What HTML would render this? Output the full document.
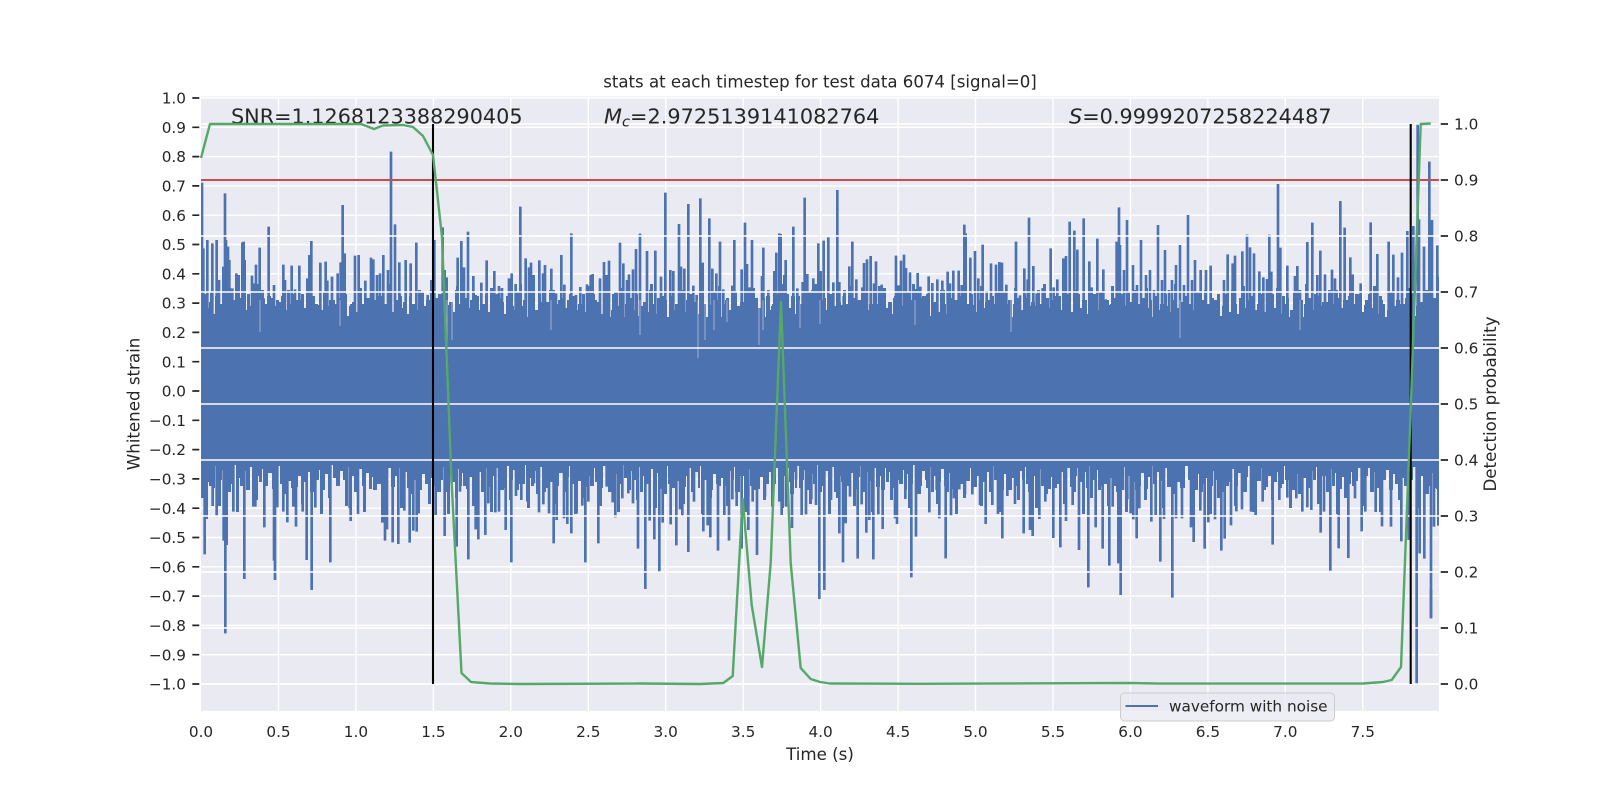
<!DOCTYPE html>
<html><head><meta charset="utf-8"><title>stats at each timestep</title>
<style>html,body{margin:0;padding:0;background:#fff}svg{display:block}text{font-family:"DejaVu Sans","Liberation Sans",sans-serif;fill:#262626}</style></head>
<body>
<svg xmlns="http://www.w3.org/2000/svg" width="1600" height="800" viewBox="0 0 1600 800">
<defs>
<clipPath id="ax"><rect x="201" y="96.5" width="1238" height="614.5"/></clipPath>
<pattern id="pt" patternUnits="userSpaceOnUse" x="201" y="284" width="97" height="34"><path fill="#4c72b0" d="M0 34V16H3V10H6V24H8V18H12V30H14V12H17V20H20V34H22V26H25V8H29V22H31V16H35V34H36V20H40V14H43V26H46V10H49V32H51V22H54V18H58V28H60V6H63V20H66V30H68V14H72V24H75V16H78V34H80V12H84V26H86V20H90V10H93V28H97V34Z"/></pattern>
<pattern id="pt2" patternUnits="userSpaceOnUse" x="201" y="270" width="131" height="48"><path fill="#4c72b0" d="M0 48V30H3V48H9V22H12V48H18V34H22V48H27V18H30V48H37V28H40V48H46V36H51V48H56V14H59V48H66V26H70V48H77V32H80V48H86V20H89V48H95V30H100V48H106V24H109V48H115V35H119V48H124V16H127V48H131Z"/></pattern>
<pattern id="pb" patternUnits="userSpaceOnUse" x="201" y="462" width="97" height="38"><path fill="#4c72b0" d="M0 0V14H3V6H6V20H9V10H12V26H14V4H17V18H21V8H24V28H27V12H30V22H33V3H35V16H39V24H42V9H45V18H48V5H51V30H54V14H58V20H61V7H64V24H67V11H71V27H74V15H77V4H79V22H83V10H86V19H90V6H93V25H97V0Z"/></pattern>
<pattern id="pb2" patternUnits="userSpaceOnUse" x="201" y="462" width="127" height="58"><path fill="#4c72b0" d="M0 0V36H3V0H8V24H12V0H17V44H20V0H26V30H30V0H35V50H38V0H45V28H49V0H54V38H57V0H63V22H67V0H72V46H75V0H81V32H85V0H90V26H94V0H100V42H103V0H109V30H113V0H119V52H122V0H127Z"/></pattern>
</defs>
<rect width="1600" height="800" fill="#fff"/>
<rect x="201" y="96.5" width="1238" height="614.5" fill="#eaeaf2"/>
<path stroke="#fff" stroke-width="1.4" fill="none" d="M201 98H1439M201 127.3H1439M201 156.6H1439M201 185.9H1439M201 215.2H1439M201 244.5H1439M201 273.8H1439M201 303.1H1439M201 332.4H1439M201 361.7H1439M201 391H1439M201 420.3H1439M201 449.6H1439M201 478.9H1439M201 508.2H1439M201 537.5H1439M201 566.8H1439M201 596.1H1439M201 625.4H1439M201 654.7H1439M201 684H1439M278.5 97V711M355.9 97V711M433.4 97V711M510.8 97V711M588.3 97V711M665.7 97V711M743.2 97V711M820.6 97V711M898.1 97V711M975.5 97V711M1053 97V711M1130.4 97V711M1207.9 97V711M1285.3 97V711M1362.8 97V711"/>
<g clip-path="url(#ax)">
<rect x="201" y="284" width="1238" height="34" fill="url(#pt)"/>
<rect x="201" y="270" width="1238" height="48" fill="url(#pt2)"/>
<rect x="201" y="462" width="1238" height="38" fill="url(#pb)"/>
<rect x="201" y="462" width="1238" height="58" fill="url(#pb2)"/>
<rect x="201" y="317" width="1238" height="146" fill="#4c72b0"/>
<g fill="none" stroke="#4c72b0" stroke-width="8">
<g transform="translate(120 60) scale(.33333)">
<path d="M246 368V900M250 565V900M262 540V900M277 550V900M290 540V900M297 660V900M310 620V900M315 400V900M318 540V900M324 560V900M328 600V900M337 685V900M349 640V900M356 645V900M367 547V900M371 545V900M374 600V900M396 647V900M400 670V900M408 614V900M419 563V900M431 715V900M446 500V900M462 675V900M470 738V900M490 614V900M495 660V900M515 617V900M525 688V900M538 617V900M562 655V900M568 585V900M574 543V900M601 608V900M617 605V900M622 662V900M636 650V900M653 640V900M662 607V900M668 435V900M674 580V900M705 587V900M716 585V900M736 662V900M753 593V900M760 598V900M771 645V900M780 640V900M790 585V900M804 630V900M813 275V900M825 493V900M838 607V900M857 600V900M872 610V900M889 548V900M923 705V900M934 660V900M943 540V900"/>
</g>
<g transform="translate(440 190) scale(.33333)">
<path d="M8 112V500M14 240V500M20 262V500M53 203V500M64 153V500M72 232V500M84 125V500M100 258V500M107 315V500M124 278V500M140 211V500M163 243V500M177 288V500M186 294V500M207 265V500M215 250V500M227 282V500M241 50V500M257 205V500M267 232V500M273 218V500M281 255V500M298 211V500M309 250V500M315 225V500M334 236V500M348 310V500M364 195V500M373 284V500M394 130V500M408 315V500M421 291V500M441 283V500M452 255V500M458 252V500M480 265V500M492 216V500M500 255V500M507 212V500M520 312V500M540 158V500M550 220V500M561 270V500M567 253V500M579 238V500M588 177V500M600 131V500M621 183V500M646 182V500M663 260V500M676 8V500M691 240V500M700 243V500M717 102V500M723 230V500M733 236V500M745 42V500M760 287V500M770 315V500M781 25V500M788 218V500M808 85V500M817 236V500M829 250V500M840 155V500M850 298V500M877 287V500M883 150V500M905 238V500M915 98V500M921 222V500M929 292V500M936 150V500M966 258V500M970 173V500M985 300V500M1003 243V500M1009 188V500M1018 130V500"/>
</g>
<g transform="translate(780 190) scale(.33333)">
<path d="M2 132V500M17 210V500M13 255V500M40 110V500M52 295V500M68 276V500M74 23V500M82 252V500M100 265V500M107 282V500M115 160V500M122 243V500M131 152V500M145 142V500M160 277V500M172 0V500M178 276V500M191 318V500M208 229V500M217 155V500M229 268V500M247 292V500M252 219V500M261 208V500M272 198V500M282 280V500M288 214V500M298 288V500M305 284V500M312 300V500M348 197V500M355 286V500M363 212V500M372 194V500M378 234V500M390 247V500M405 297V500M413 249V500M421 290V500M446 259V500M457 279V500M472 268V500M487 272V500M503 245V500M510 280V500M520 242V500M536 242V500M545 285V500M553 104V500M557 130V500M571 203V500M585 183V500M595 265V500M608 164V500M620 303V500M633 220V500M648 224V500M658 216V500M666 218V500M679 284V500M688 332V500M708 155V500M720 316V500M733 235V500M747 83V500M743 268V500M760 228V500M770 310V500M788 294V500M812 175V500M821 292V500M832 268V500M850 205V500M858 198V500M869 95V500M883 122V500M892 179V500M911 85V500M928 214V500M935 292V500M952 146V500M970 238V500M977 328V500M987 345V500M1010 155V500M1017 52V500"/>
</g>
<path stroke-width="2.6" d="M1120 245V330M1124 270V330M1127 220V330M1133 265V330M1137 285V330M1141 240V330M1146 275V330M1150 270V330M1154 290V330M1158 225V330M1162 280V330M1165 250V330M1169 290V330M1172 280V330M1176 265V330M1180 245V330M1184 285V330M1188 215V330M1192 280V330M1195 260V330"/>
<g transform="translate(1200 90) scale(.33333)">
<path d="M2 540V800M18 540V800M32 527V800M72 570V800M83 493V800M98 520V800M105 497V800M127 484V800M141 434V800M150 472V800M162 490V800M178 544V800M190 562V800M201 567V800M208 434V800M214 545V800M234 282V800M241 473V800M262 527V800M285 558V800M292 528V800M300 600V800M322 456V800M337 398V800M352 555V800M361 482V800M375 553V800M396 539V800M405 565V800M421 333V800M434 413V800M451 502V800M458 553V800M482 580V800M512 397V800M532 492V800M566 455V800M580 494V800M594 562V800M606 488V800M622 423V800M640 408V800M657 388V800M653 102V800M672 470V800M688 215V800M696 390V800M712 466V800M716 560V800"/>
</g>
<g transform="translate(120 500) scale(.33333)">
<path d="M254 163V-110M260 57V-110M278 18V-110M290 48V-110M311 122V-110M316 400V-110M320 135V-110M340 35V-110M373 237V-110M400 20V-110M406 20V-110M433 82V-110M462 182V-110M465 240V-110M472 22V-110M490 35V-110M502 67V-110M520 20V-110M528 80V-110M548 35V-110M560 180V-110M575 270V-110M586 23V-110M631 187V-110M689 25V-110M692 63V-110M714 42V-110M787 68V-110M795 122V-110M801 88V-110M818 127V-110M835 132V-110M853 32V-110M869 128V-110M880 92V-110M890 95V-110M896 40V-110M947 45V-110"/>
</g>
<g transform="translate(440 450) scale(.33333)">
<path d="M14 258V0M22 65V0M35 100V0M50 290V0M60 125V0M85 328V0M107 238V0M115 268V0M136 255V0M145 160V0M166 187V0M177 185V0M197 240V0M214 337V0M228 138V0M244 150V0M262 155V0M282 100V0M297 187V0M310 163V0M327 190V0M341 280V0M350 210V0M372 205V0M382 222V0M394 250V0M410 190V0M427 167V0M436 337V0M445 155V0M458 100V0M475 280V0M500 110V0M518 157V0M526 202V0M547 145V0M565 130V0M579 160V0M594 296V0M616 417V0M629 212V0M643 268V0M658 365V0M668 218V0M692 223V0M709 286V0M720 178V0M727 200V0M745 306V0M762 155V0M790 244V0M803 226V0M811 262V0M834 302V0M853 195V0M867 272V0M877 148V0M890 168V0M905 296V0M925 240V0M938 155V0M951 315V0M975 140V0M997 170V0M1018 155V0"/>
</g>
<g transform="translate(780 450) scale(.33333)">
<path d="M5 195V0M18 170V0M36 234V0M48 90V0M65 195V0M78 193V0M94 148V0M108 165V0M118 447V0M133 420V0M153 150V0M178 250V0M189 337V0M197 220V0M210 140V0M233 326V0M245 163V0M259 248V0M268 210V0M280 328V0M295 193V0M308 237V0M345 205V0M351 222V0M376 147V0M394 382V0M408 260V0M448 187V0M470 120V0M478 205V0M497 325V0M513 197V0M522 145V0M538 118V0M555 133V0M577 133V0M600 165V0M617 222V0M637 165V0M654 192V0M667 265V0M682 138V0M705 162V0M731 250V0M750 240V0M758 258V0M778 207V0M796 155V0M820 264V0M841 292V0M858 213V0M878 165V0M897 300V0M925 412V0M947 232V0M968 296V0M988 347V0M998 170V0M1015 340V0"/>
</g>
<g transform="translate(1120 450) scale(.33333)">
<path d="M2 435V0M9 120V0M22 148V0M32 190V0M40 208V0M50 265V0M58 175V0M80 95V0M94 215V0M107 195V0M121 335V0M132 207V0M157 443V0M168 205V0M186 205V0M213 232V0M221 276V0M241 182V0M254 296V0M265 217V0M285 208V0M304 302V0M314 266V0M333 226V0M349 184V0M366 178V0M393 185V0M407 195V0M428 155V0M458 284V0M478 150V0M502 143V0M529 145V0M547 185V0M562 172V0M574 180V0M602 248V0M612 185V0M631 362V0M656 295V0M685 324V0M705 145V0M725 244V0M736 185V0M767 186V0M786 229V0M813 230V0M844 274V0M866 270V0M890 700V0M899 310V0M913 326V0M933 505V0M942 230V0M955 227V0"/>
</g>
</g>
<path fill="none" stroke="#eaeaf2" stroke-opacity=".55" stroke-width="1" d="M698 300V358M705 300V340M714 300V330M727 300V322M759 300V345M763 300V330M800 300V328M820 300V324M1011 300V332M447 300V360M452 300V340M551 300V330M640 300V335M915 300V325M1180 300V338M1300 300V330M260 300V332M340 300V326"/>
<path fill="none" stroke="#4c72b0" stroke-width="2.6" d="M1431 590V618"/>
</g>
<rect x="1120.5" y="693" width="214" height="28" rx="4" fill="#eaeaf2" fill-opacity=".8" stroke="#ccc" stroke-width="1"/>
<path d="M1125.5 706H1158" stroke="#4c72b0" stroke-width="2.08" fill="none"/>
<text x="1169" y="711.5" font-size="15.28">waveform with noise</text>
<path stroke="#fff" stroke-width="1.4" fill="none" d="M201 124H1439M201 180H1439M201 236H1439M201 292H1439M201 348H1439M201 404H1439M201 460H1439M201 516H1439M201 572H1439M201 628H1439M201 684H1439"/>
<path d="M201 180H1439" stroke="#c44e52" stroke-width="2.08" fill="none"/>
<text x="231" y="123.3" font-size="20.75">SNR=1.1268123388290405</text>
<text x="604" y="123.3" font-size="20.83"><tspan font-style="italic">M</tspan><tspan font-style="italic" font-size="14.6" dy="3">c</tspan><tspan dy="-3">=2.9725139141082764</tspan></text>
<text x="1069" y="123.3" font-size="20.83"><tspan font-style="italic">S</tspan>=0.9999207258224487</text>
<path d="M433 124V684M1410.7 124V684" stroke="#000" stroke-width="2.08" fill="none"/>
<polyline fill="none" stroke="#55a868" stroke-width="2.4" stroke-linejoin="round" points="201,158 210,124 361,124 374,129 383,125.5 403,125 413,127 423,136 433,155 442,237 451.5,480 461.5,673 471,682 490,683.5 520,684 640,683.5 700,684 723.3,683 732.7,676 742.7,499 751.7,605 762,667 770.7,563 781,302 790.7,563 800.7,668 810.7,679 820,682 830,683.5 920,683.8 1130,683 1160,683.6 1363,683.5 1383,682 1391.7,680 1401,667 1410.5,415 1420.7,124 1430.7,123.5"/>
<path fill="none" stroke="#262626" stroke-width="1.7" d="M192.3 98H199.3M192.3 127.3H199.3M192.3 156.6H199.3M192.3 185.9H199.3M192.3 215.2H199.3M192.3 244.5H199.3M192.3 273.8H199.3M192.3 303.1H199.3M192.3 332.4H199.3M192.3 361.7H199.3M192.3 391H199.3M192.3 420.3H199.3M192.3 449.6H199.3M192.3 478.9H199.3M192.3 508.2H199.3M192.3 537.5H199.3M192.3 566.8H199.3M192.3 596.1H199.3M192.3 625.4H199.3M192.3 654.7H199.3M192.3 684H199.3M1440.7 124H1448M1440.7 180H1448M1440.7 236H1448M1440.7 292H1448M1440.7 348H1448M1440.7 404H1448M1440.7 460H1448M1440.7 516H1448M1440.7 572H1448M1440.7 628H1448M1440.7 684H1448"/>
<g font-size="15.28" text-anchor="end">
<text x="186" y="103.6">1.0</text><text x="186" y="132.9">0.9</text><text x="186" y="162.2">0.8</text><text x="186" y="191.5">0.7</text><text x="186" y="220.8">0.6</text><text x="186" y="250.1">0.5</text><text x="186" y="279.4">0.4</text><text x="186" y="308.7">0.3</text><text x="186" y="338">0.2</text><text x="186" y="367.3">0.1</text><text x="186" y="396.6">0.0</text><text x="186" y="425.9">−0.1</text><text x="186" y="455.2">−0.2</text><text x="186" y="484.5">−0.3</text><text x="186" y="513.8">−0.4</text><text x="186" y="543.1">−0.5</text><text x="186" y="572.4">−0.6</text><text x="186" y="601.7">−0.7</text><text x="186" y="631">−0.8</text><text x="186" y="660.3">−0.9</text><text x="186" y="689.6">−1.0</text>
</g>
<g font-size="15.28">
<text x="1454" y="129.6">1.0</text><text x="1454" y="185.6">0.9</text><text x="1454" y="241.6">0.8</text><text x="1454" y="297.6">0.7</text><text x="1454" y="353.6">0.6</text><text x="1454" y="409.6">0.5</text><text x="1454" y="465.6">0.4</text><text x="1454" y="521.6">0.3</text><text x="1454" y="577.6">0.2</text><text x="1454" y="633.6">0.1</text><text x="1454" y="689.6">0.0</text>
</g>
<g font-size="15.28" text-anchor="middle">
<text x="201" y="737">0.0</text><text x="278.5" y="737">0.5</text><text x="355.9" y="737">1.0</text><text x="433.4" y="737">1.5</text><text x="510.8" y="737">2.0</text><text x="588.3" y="737">2.5</text><text x="665.7" y="737">3.0</text><text x="743.2" y="737">3.5</text><text x="820.6" y="737">4.0</text><text x="898.1" y="737">4.5</text><text x="975.5" y="737">5.0</text><text x="1053" y="737">5.5</text><text x="1130.4" y="737">6.0</text><text x="1207.9" y="737">6.5</text><text x="1285.3" y="737">7.0</text><text x="1362.8" y="737">7.5</text>
</g>
<text x="820" y="87.5" font-size="16.6" text-anchor="middle">stats at each timestep for test data 6074 [signal=0]</text>
<text x="820" y="760" font-size="16.67" text-anchor="middle">Time (s)</text>
<text transform="translate(139.5 404) rotate(-90)" font-size="16.67" text-anchor="middle">Whitened strain</text>
<text transform="translate(1496 404) rotate(-90)" font-size="16.67" text-anchor="middle">Detection probability</text>
</svg>
</body></html>
